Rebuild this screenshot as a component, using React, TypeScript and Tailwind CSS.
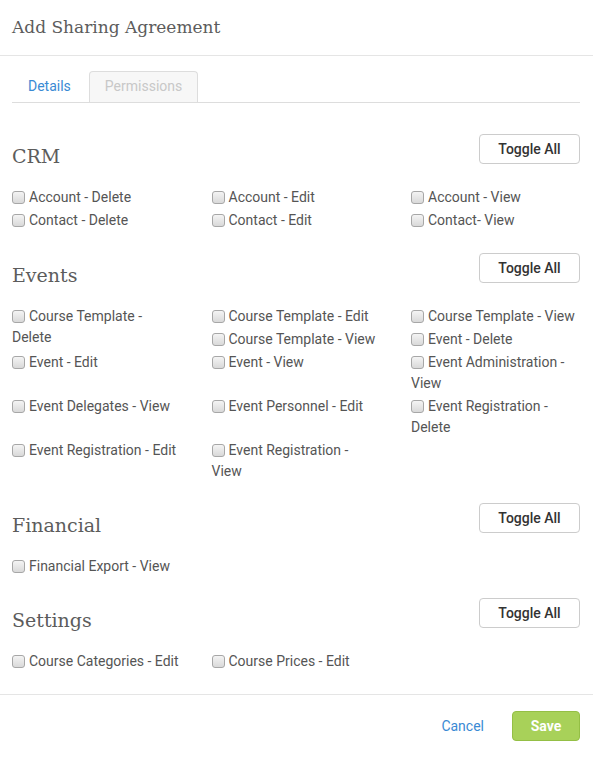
import React from "react";

const body = { fontFamily: "Roboto, 'Liberation Sans', sans-serif" };
const slab = { fontFamily: "'DejaVu Serif', 'Liberation Serif', serif" };

function Check({ label }: { label: string }) {
  return (
    <label className="mb-[2px] block text-[14px] leading-[21px] text-[#555]">
      <span className="relative top-[1px] mr-[4px] inline-block h-[13px] w-[13px] rounded-[3px] border border-[#a7a7a7] bg-gradient-to-b from-[#f4f4f4] to-[#d9d9d9] align-[-1px]" />
      {label}
    </label>
  );
}

function SectionHeader({ title }: { title: string }) {
  return (
    <div className="flex items-start justify-between">
      <h3 className="mt-[11px] text-[19px] leading-[22px] text-[#5c5c5c]" style={slab}>
        {title}
      </h3>
      <button className="h-[30px] w-[101px] rounded-[4px] border border-[#ccc] bg-white text-[14px] font-medium text-[#333]">
        Toggle All
      </button>
    </div>
  );
}

// each row is a list of columns, each column a list of labels
function Rows({ rows }: { rows: string[][][] }) {
  return (
    <div className="mt-[20px]">
      {rows.map((row, i) => (
        <div key={i} className="grid grid-cols-[170px_170px_170px] gap-x-[29.5px]">
          {row.map((col, j) => (
            <div key={j}>
              {col.map((label) => (
                <Check key={label + j} label={label} />
              ))}
            </div>
          ))}
        </div>
      ))}
    </div>
  );
}

export default function App() {
  const sections = [
    {
      title: "CRM",
      gap: "mb-[20px]",
      rows: [
        [["Account - Delete"], ["Account - Edit"], ["Account - View"]],
        [["Contact - Delete"], ["Contact - Edit"], ["Contact- View"]],
      ],
    },
    {
      title: "Events",
      gap: "mb-[19px]",
      rows: [
        [
          ["Course Template - Delete"],
          ["Course Template - Edit", "Course Template - View"],
          ["Course Template - View", "Event - Delete"],
        ],
        [["Event - Edit"], ["Event - View"], ["Event Administration - View"]],
        [["Event Delegates - View"], ["Event Personnel - Edit"], ["Event Registration - Delete"]],
        [["Event Registration - Edit"], ["Event Registration - View"], []],
      ],
    },
    {
      title: "Financial",
      gap: "mb-[19px]",
      rows: [[["Financial Export - View"], [], []]],
    },
    {
      title: "Settings",
      gap: "mb-[20px]",
      rows: [[["Course Categories - Edit"], ["Course Prices - Edit"], []]],
    },
  ];

  return (
    <div className="h-[757px] w-[593px] overflow-hidden bg-white" style={body}>
      <div className="flex h-[56px] items-center border-b border-[#e5e5e5] px-3">
        <h4 className="text-[17px] text-[#5c5c5c]" style={slab}>
          Add Sharing Agreement
        </h4>
      </div>

      <div className="pl-3 pr-[13px]">
        <ul className="mt-[15px] flex border-b border-[#ddd]">
          <li className="mr-[2px]">
            <a className="mb-[-1px] block border border-transparent px-[15px] pb-[6px] pt-[4px] text-[14px] leading-[20px] text-[#3a8ad4]">
              Details
            </a>
          </li>
          <li className="mr-[2px]">
            <a className="mb-[-1px] block rounded-t-[4px] border border-b-0 border-[#ddd] bg-[#f7f7f7] px-[15px] pb-[6px] pt-[4px] text-[14px] leading-[20px] text-[#c8c8c8]">
              Permissions
            </a>
          </li>
        </ul>

        <div className="pt-[31px]">
          {sections.map((s) => (
            <div key={s.title} className={s.gap}>
              <SectionHeader title={s.title} />
              <Rows rows={s.rows} />
            </div>
          ))}
        </div>
      </div>

      <div className="mt-[9px] flex items-center justify-end gap-[28px] border-t border-[#e5e5e5] pb-[13px] pl-3 pr-[13px] pt-[16px]">
        <a className="text-[14px] text-[#3a8ad4]">Cancel</a>
        <button className="h-[30px] w-[68px] rounded-[4px] border border-[#94bf45] bg-[#a8d159] text-[14px] font-bold text-white">
          Save
        </button>
      </div>
    </div>
  );
}
